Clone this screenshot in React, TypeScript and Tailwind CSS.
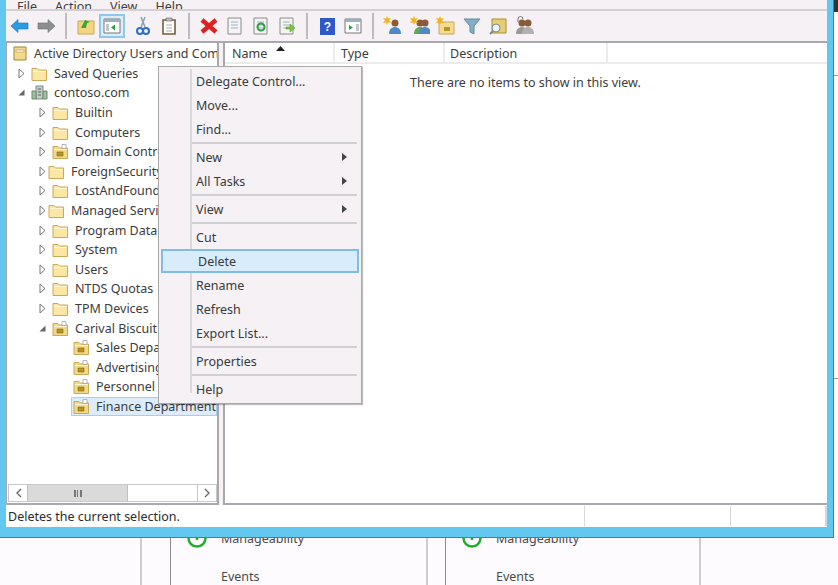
import { ReactNode } from "react";

const font = "font-['Noto_Sans',sans-serif]";

function Folder({ ou = false }: { ou?: boolean }) {
  return (
    <svg width="17" height="17" viewBox="0 0 17 17" className="shrink-0">
      <path d="M1 3.5h5l1.5 1.5H15.500v10.500H1z" fill={ou ? "#f2d98a" : "#fbe6a4"} stroke="#c9a85a" strokeWidth="1" />
      <path d="M2 6h13v1H2z" fill="#fff6d6" />
      {ou && <path d="M5 9h6v4H5z" fill="#b8951f" stroke="#7f6a1c" strokeWidth=".6" />}
      {ou && <path d="M10 1.500h4v4h-4z" fill="#fff" stroke="#9a9a9a" strokeWidth=".7" />}
    </svg>
  );
}

function Expander({ open = false }: { open?: boolean }) {
  return (
    <svg width="9" height="11" viewBox="0 0 9 11" className="shrink-0">
      {open ? <path d="M7.500 2.500v6h-6z" fill="#666" /> : <path d="M2 1l5 4.500L2 10z" fill="#fff" stroke="#777" />}
    </svg>
  );
}

function TreeRow({ indent, expander, icon, label, selected }: { indent: string; expander?: "open" | "closed"; icon: ReactNode; label: string; selected?: boolean }) {
  return (
    <div className={`flex h-[19.6px] items-center whitespace-nowrap ${indent}`}>
      {expander ? <div className="w-[13px]"><Expander open={expander === "open"} /></div> : null}
      <div className={`flex h-[19.6px] grow items-center gap-[6px] pl-[1px] ${selected ? "border border-[#a9cdee] bg-[#dcecfb]" : ""}`}>
        {icon}
        <span className="text-[#3c3c3c]">{label}</span>
      </div>
    </div>
  );
}

function ToolSep() {
  return <div className="mx-[6px] h-[26px] w-[2px] shrink-0 bg-[#bdbdc0]" />;
}

function ToolBtn({ children, active }: { children: ReactNode; active?: boolean }) {
  return (
    <div className={`flex h-[24px] w-[26px] shrink-0 items-center justify-center ${active ? "border-2 border-[#8ec8ea] bg-[#dcecf8]" : ""}`}>
      {children}
    </div>
  );
}

function Doc({ accent }: { accent: ReactNode }) {
  return (
    <svg width="20" height="20" viewBox="0 0 20 20">
      <path d="M3 2h13v16H3z" fill="#f4f4f4" stroke="#8a8a8a" />
      <path d="M6 6h7M6 9h7M6 12h7" stroke="#9fb4c8" />
      {accent}
    </svg>
  );
}

function Person({ x = 0, color = "#4f88c6" }: { x?: number; color?: string }) {
  return (
    <g transform={`translate(${x} 0)`}>
      <circle cx="11" cy="7" r="3.500" fill="#8a5a3a" />
      <path d="M5 18c0-5 3-7 6-7s6 2 6 7z" fill={color} />
    </g>
  );
}

function Star() {
  return <path d="M4 0l1 2.500L8 2 6 4.500 8 7 5 6.500 4 9 3 6.500 0 7l2-2.500L0 2l3 .5z" fill="#f6b21a" />;
}

function Toolbar() {
  return (
    <div className="flex h-[32px] items-center border-b-2 border-[#a8a8ae] pl-[1px]">
      <ToolBtn>
        <svg width="20" height="16" viewBox="0 0 20 16"><path d="M1 8l7-6.500V5h10v6H8v3.500z" fill="#2c9ce0" stroke="#1b76b4" strokeWidth=".6" /></svg>
      </ToolBtn>
      <ToolBtn>
        <svg width="20" height="16" viewBox="0 0 20 16"><path d="M19 8l-7-6.500V5H2v6h10v3.500z" fill="#8e8e8e" stroke="#6e6e6e" strokeWidth=".6" /></svg>
      </ToolBtn>
      <ToolSep />
      <ToolBtn>
        <svg width="18" height="18" viewBox="0 0 18 18"><path d="M1 4h16v13H1z" fill="#f5d67f" stroke="#c9a85a" /><path d="M4 11l4-8 5 2-3 1-1 5z" fill="#3aa63a" /></svg>
      </ToolBtn>
      <ToolBtn active>
        <svg width="18" height="16" viewBox="0 0 18 16"><path d="M1 1h16v14H1z" fill="#fff" stroke="#777" /><path d="M1 1h16v3H1z" fill="#9bb0bf" /><path d="M3 6h3v7H3z" fill="#c0c8cc" /><path d="M12 6.500v6l-4-3z" fill="#2f9a4a" /></svg>
      </ToolBtn>
      <div className="w-[5px] shrink-0" />
      <ToolBtn>
        <svg width="14" height="20" viewBox="0 0 14 20"><path d="M9 1L5 11M5 1l4 10" stroke="#8aa0b4" strokeWidth="1.500" /><circle cx="4" cy="15" r="3" fill="none" stroke="#2f6fc4" strokeWidth="2" /><circle cx="10" cy="15" r="3" fill="none" stroke="#2f6fc4" strokeWidth="2" /></svg>
      </ToolBtn>
      <ToolBtn>
        <svg width="14" height="18" viewBox="0 0 14 18"><path d="M1 3h12v14H1z" fill="#fff" stroke="#7a5a3a" strokeWidth="1.600" /><path d="M4 1h6v3H4z" fill="#bbb" stroke="#666" strokeWidth=".6" /><path d="M4 8h6M4 11h6M4 14h6" stroke="#aaa" /></svg>
      </ToolBtn>
      <ToolSep />
      <ToolBtn>
        <svg width="18" height="18" viewBox="0 0 18 18"><path d="M2 3l14 12M16 3L2 15" stroke="#dd2222" strokeWidth="4.500" /></svg>
      </ToolBtn>
      <ToolBtn><Doc accent={null} /></ToolBtn>
      <ToolBtn>
        <Doc accent={<circle cx="10" cy="11" r="3.500" fill="none" stroke="#2e9e3e" strokeWidth="2" />} />
      </ToolBtn>
      <ToolBtn>
        <Doc accent={<path d="M9 11h4V8l5 4-5 4v-3H9z" fill="#7cc242" stroke="#4c9a24" strokeWidth=".5" />} />
      </ToolBtn>
      <ToolSep />
      <ToolBtn>
        <svg width="15" height="17" viewBox="0 0 15 17"><path d="M0 0h15v17H0z" fill="#2f58c8" /><text x="7.500" y="13" textAnchor="middle" fontSize="12" fontWeight="700" fill="#fff" fontFamily="Liberation Sans">?</text></svg>
      </ToolBtn>
      <ToolBtn>
        <svg width="18" height="16" viewBox="0 0 18 16"><path d="M1 1h16v14H1z" fill="#fff" stroke="#777" /><path d="M1 1h16v3H1z" fill="#9bb0bf" /><path d="M5 7v5l4-2.500z" fill="#2f9a4a" /><path d="M12 6h3v7h-3z" fill="#c0c8cc" /></svg>
      </ToolBtn>
      <ToolSep />
      <ToolBtn>
        <svg width="20" height="20" viewBox="0 0 20 20"><Person x={1} /><Star /></svg>
      </ToolBtn>
      <div className="w-[1px] shrink-0" />
      <ToolBtn>
        <svg width="20" height="20" viewBox="0 0 20 20"><Person x={-1} color="#5fa85f" /><Person x={4} /><Star /></svg>
      </ToolBtn>
      <ToolBtn>
        <svg width="20" height="20" viewBox="0 0 20 20"><path d="M3 6h15v12H3z" fill="#f5dc92" stroke="#c9a85a" /><path d="M8 11h6v4H8z" fill="#b8951f" /><Star /></svg>
      </ToolBtn>
      <ToolBtn>
        <svg width="18" height="18" viewBox="0 0 18 18"><path d="M1 2h16l-6 7v8l-4-2V9z" fill="#7fb0c8" stroke="#6a8a9c" /></svg>
      </ToolBtn>
      <ToolBtn>
        <svg width="18" height="18" viewBox="0 0 18 18"><path d="M3 2h14v14H3z" fill="#e6cf72" stroke="#a89030" /><circle cx="7" cy="11" r="4" fill="#eef5fa" stroke="#7b8a94" /><path d="M4 14l-3 3" stroke="#7b8a94" strokeWidth="2" /></svg>
      </ToolBtn>
      <ToolBtn>
        <svg width="20" height="20" viewBox="0 0 20 20"><Person x={-3} color="#9a9a9a" /><Person x={3} color="#b0b0b0" /><path d="M4 6V3a2.500 2.500 0 015 0" fill="none" stroke="#777" /></svg>
      </ToolBtn>
    </div>
  );
}

function ScrollBtn({ dir }: { dir: "l" | "r" }) {
  return (
    <div className="flex w-[18px] shrink-0 items-center justify-center bg-white">
      <svg width="7" height="10" viewBox="0 0 7 10"><path d={dir === "l" ? "M6 1L2 5l4 4" : "M1 1l4 4-4 4"} fill="none" stroke="#666" strokeWidth="1.300" /></svg>
    </div>
  );
}

function TreePane() {
  const folders: [string, boolean][] = [
    ["Builtin", false],
    ["Computers", false],
    ["Domain Controllers", true],
    ["ForeignSecurityPrincipals", false],
    ["LostAndFound", false],
    ["Managed Service Accounts", false],
    ["Program Data", false],
    ["System", false],
    ["Users", false],
    ["NTDS Quotas", false],
    ["TPM Devices", false],
  ];
  const children = ["Sales Department", "Advertising Department", "Personnel Department"];

  return (
    <div className="flex w-[213px] shrink-0 flex-col overflow-hidden border-r-2 border-b-2 border-l border-[#a8a8ae] bg-white pt-[1px]">
      <div className="pl-[6px]">
        <div className="flex h-[19.6px] items-center gap-[7px] whitespace-nowrap">
          <svg width="14" height="15" viewBox="0 0 14 15" className="shrink-0"><path d="M1 1h12v13H1z" fill="#f1d98e" stroke="#a8842c" /><path d="M3 4h8v2H3z" fill="#fff" stroke="#a8842c" strokeWidth=".5" /></svg>
          <span className="text-[#3c3c3c]">Active Directory Users and Computers</span>
        </div>
      </div>
      <TreeRow indent="pl-[10px]" expander="closed" icon={<Folder />} label="Saved Queries" />
      <TreeRow indent="pl-[10px]" expander="open" icon={<svg width="17" height="17" viewBox="0 0 17 17" className="shrink-0"><path d="M5 2h7v13H5z" fill="#c4ccc8" stroke="#7e8a84" /><path d="M1 7h4v8H1zM12 7h4v8h-4z" fill="#9cc09c" stroke="#6e8a6e" /><path d="M7 5h3M7 8h3M7 11h3" stroke="#55655c" /></svg>} label="contoso.com" />
      {folders.map(([name, ou]) => (
        <TreeRow key={name} indent="pl-[31px]" expander="closed" icon={<Folder ou={ou} />} label={name} />
      ))}
      <TreeRow indent="pl-[31px]" expander="open" icon={<Folder ou />} label="Carival Biscuit" />
      {children.map((name) => (
        <TreeRow key={name} indent="pl-[65px]" icon={<Folder ou />} label={name} />
      ))}
      <TreeRow indent="pl-[64px]" icon={<Folder ou />} label="Finance Department" selected />
      <div className="mt-auto mb-[1px] ml-[1px] flex h-[18px] w-[209px] border border-[#c8c8c8] bg-white">
        <ScrollBtn dir="l" />
        <div className="flex w-[101px] items-center justify-center border-x border-[#c0c0c0] bg-[#dadada]">
          <div className="h-[7px] w-[8px] border-x-2 border-[#777]"><div className="mx-auto h-full w-[1.500px] bg-[#777]" /></div>
        </div>
        <div className="grow" />
        <div className="border-l border-[#c8c8c8]"><div className="flex h-full"><ScrollBtn dir="r" /></div></div>
      </div>
    </div>
  );
}

function ListPane() {
  return (
    <div className="ml-[4px] grow border-b-2 border-l-2 border-[#a8a8ae] bg-white">
      <div className="flex h-[21px] border-b-2 border-[#ececec] text-[#3c3c3c]">
        <div className="relative w-[110px] border-r-2 border-[#ececec] pt-[2px] pl-[7px]">
          Name
          <svg width="9" height="5" viewBox="0 0 9 5" className="absolute top-[3px] left-[51px]"><path d="M4.500 0L9 5H0z" fill="#222" /></svg>
        </div>
        <div className="w-[110px] border-r-2 border-[#ececec] pt-[2px] pl-[6px]">Type</div>
        <div className="w-[163px] border-r-2 border-[#ececec] pt-[2px] pl-[5px]">Description</div>
      </div>
      <p className="mt-[10px] pl-[185px] text-[#3c3c3c]">There are no items to show in this view.</p>
    </div>
  );
}

function MenuItem({ label, sub, active }: { label: string; sub?: boolean; active?: boolean }) {
  return (
    <div className={`relative flex h-[24px] items-center pr-[12px] pl-[35px] ${active ? "-my-0 mx-[2px] border-2 border-[#7fbde4] bg-[#d9ecfc] pl-[33px]" : "mx-[2px]"}`}>
      <span className="text-[#3a3a3a]">{label}</span>
      {sub && <svg width="5" height="8" viewBox="0 0 5 8" className="ml-auto"><path d="M0 0l5 4-5 4z" fill="#444" /></svg>}
    </div>
  );
}

function MenuSep() {
  return <div className="my-[1px] ml-[32px] mr-[4px] h-[2px] bg-[#d0d0d4]" />;
}

function ContextMenu() {
  return (
    <div className="absolute top-[66px] left-[158px] z-20 w-[204px] border border-[#a8a8a8] bg-[#f5f1f5] py-[2px] shadow-[1px_1px_1px_rgba(0,0,0,0.25)]">
      <div className="absolute top-[2px] bottom-[10px] left-[31px] w-[2px] bg-[#d8d8dc]" />
      <MenuItem label="Delegate Control..." />
      <MenuItem label="Move..." />
      <MenuItem label="Find..." />
      <MenuSep />
      <MenuItem label="New" sub />
      <MenuItem label="All Tasks" sub />
      <MenuSep />
      <MenuItem label="View" sub />
      <MenuSep />
      <MenuItem label="Cut" />
      <MenuItem label="Delete" active />
      <MenuItem label="Rename" />
      <MenuItem label="Refresh" />
      <MenuItem label="Export List..." />
      <MenuSep />
      <MenuItem label="Properties" />
      <MenuSep />
      <MenuItem label="Help" />
    </div>
  );
}

function ServerCard() {
  return (
    <div className="-mt-[12px] pl-[16px]">
      <div className="flex h-[24px] items-center gap-[14px]">
        <svg width="20" height="20" viewBox="0 0 20 20"><circle cx="10" cy="10" r="8.500" fill="none" stroke="#21ad2b" strokeWidth="2.500" /><path d="M10 5v7" stroke="#21ad2b" strokeWidth="2.500" /></svg>
        <span>Manageability</span>
      </div>
      <div className="mt-[18px] pl-[34px]">Events</div>
    </div>
  );
}

export default function App() {
  return (
    <div className={`flex h-[585px] w-[838px] flex-col overflow-hidden bg-[#fdfbfd] text-[12.500px] leading-[17px] ${font}`}>
      <div className="relative z-10 flex h-[538px] shrink-0">
        <div className="flex w-[834px] flex-col border-r border-b border-[#4a7f96] bg-[#62c8ef] px-[6px] pb-[10px]">
          <div className="flex grow flex-col bg-[#f5f1f5]">
            <div className="flex h-[11px] items-end gap-[18px] overflow-hidden border-b-2 border-[#d2d0d4] pl-[11px] leading-[17px] text-[#3c3c3c]">
              <span className="-mb-[6px]">File</span>
              <span className="-mb-[6px]">Action</span>
              <span className="-mb-[6px]">View</span>
              <span className="-mb-[6px]">Help</span>
            </div>
            <Toolbar />
            <div className="flex min-h-0 grow">
              <TreePane />
              <ListPane />
            </div>
            <div className="flex h-[22px] items-center bg-white text-[#2c2c2c]">
              <div className="w-[578px] pl-[2px]">Deletes the current selection.</div>
              <div className="h-[20px] w-[146px] border-l border-[#d8d8d8]" />
              <div className="h-[20px] grow border-l border-r-2 border-[#d8d8d8]" />
            </div>
          </div>
        </div>
        <div className="flex grow flex-col">
          <div className="h-[12px] bg-[#303438]" />
          <div className="h-[63px]" />
          <div className="h-[1px] bg-[#9a9a9a]" />
          <div className="h-[302px]" />
          <div className="h-[1px] bg-[#9a9a9a]" />
        </div>
        <ContextMenu />
      </div>
      <div className="flex grow pl-[140px] text-[#4a4a4a]">
        <div className="w-[30px] border-l-2 border-[#cdcdcd]" />
        <div className="w-[256px] border-l border-[#8c8c8c]"><ServerCard /></div>
        <div className="w-[19px] border-l-2 border-[#cdcdcd]" />
        <div className="w-[256px] border-r-2 border-l border-r-[#cdcdcd] border-l-[#8c8c8c]"><ServerCard /></div>
      </div>
    </div>
  );
}
